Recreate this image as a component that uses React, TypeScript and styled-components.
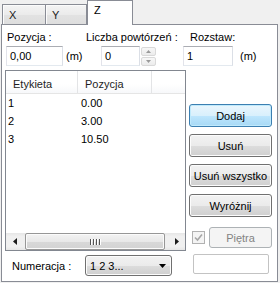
import React from "react";
import styled, { createGlobalStyle, css } from "styled-components";

const GlobalStyle = createGlobalStyle`
  html, body { margin: 0; padding: 0; background: #f0f0f0; }
  body {
    font-family: "Liberation Sans", Arial, sans-serif;
    font-size: 11px;
    color: #000;
  }
  * { box-sizing: border-box; }
`;

const Window = styled.div`
  width: 280px;
  height: 283px;
  padding: 0 2px 1px 1px;
  display: flex;
  flex-direction: column;
`;

const TabStrip = styled.div`
  display: flex;
  align-items: flex-start;
  height: 25px;
  padding-left: 1px;
  position: relative;
  z-index: 1;
`;

const Tab = styled.div<{ $selected?: boolean; $w: number; $overlap?: boolean }>`
  width: ${(p) => p.$w}px;
  margin-left: ${(p) => (p.$overlap ? -1 : 0)}px;
  border: 1px solid #898c95;
  border-bottom: none;
  padding-left: 6px;
  line-height: 13px;
  ${(p) =>
    p.$selected
      ? css`
          height: 25px;
          background: #ffffff;
          padding-top: 3px;
          position: relative;
          z-index: 2;
        `
      : css`
          height: 20px;
          margin-top: 4px;
          background: linear-gradient(#f4f4f4, #ebebeb 50%, #e2e2e2 51%, #dedede);
          box-shadow: inset 1px 1px 0 #fcfcfc;
          padding-top: 4px;
          color: #1a1a1a;
        `}
`;

const Panel = styled.div`
  flex: 1;
  margin-top: -1px;
  border: 1px solid #898c95;
  background: #ffffff;
  padding: 6px 0 0 3px;
  display: flex;
  flex-direction: column;
`;

const TopRow = styled.div`
  display: grid;
  grid-template-columns: 80px 97px 1fr;
  padding-left: 1px;
`;

const Field = styled.div`
  display: flex;
  flex-direction: column;
  gap: 2px;
`;

const Label = styled.div<{ $offset?: number }>`
  line-height: 13px;
  height: 13px;
  margin-left: ${(p) => p.$offset ?? 0}px;
  white-space: nowrap;
`;

const InputRow = styled.div<{ $offset?: number }>`
  display: flex;
  align-items: center;
  margin-left: ${(p) => p.$offset ?? 0}px;
  height: 20px;
`;

const TextBox = styled.div<{ $w: number }>`
  width: ${(p) => p.$w}px;
  height: 20px;
  border: 1px solid;
  border-color: #abadb3 #dbdfe6 #e3e9ef #e2e3ea;
  background: #fff;
  padding: 0 0 0 3px;
  line-height: 18px;
`;

const Unit = styled.span<{ $gap: number }>`
  margin-left: ${(p) => p.$gap}px;
  line-height: 13px;
`;

const Spinner = styled.div`
  width: 15px;
  height: 19px;
  display: flex;
  flex-direction: column;
  gap: 1px;
  margin-left: 1px;
`;

const SpinButton = styled.div`
  flex: 1;
  border: 1px solid #d9d9d9;
  border-radius: 2px;
  background: linear-gradient(#f7f7f7, #ececec);
  display: flex;
  align-items: center;
  justify-content: center;
`;

const Body = styled.div`
  display: flex;
  gap: 3px;
  margin-top: 4px;
`;

const LeftCol = styled.div`
  width: 181px;
  display: flex;
  flex-direction: column;
`;

const Table = styled.div`
  height: 181px;
  border: 1px solid #828790;
  background: #fff;
  display: flex;
  flex-direction: column;
`;

const Cols = css`
  display: grid;
  grid-template-columns: 72px 74px 1fr;
`;

const HeaderRow = styled.div`
  ${Cols};
  height: 23px;
  border-bottom: 1px solid #e5e5e5;
  background: linear-gradient(#ffffff, #ffffff 60%, #f7f8fa);
`;

const HeaderCell = styled.div`
  border-right: 1px solid #e3e4e6;
  padding: 7px 0 0 7px;
  line-height: 13px;
  color: #1e1e1e;
  &:last-child { border-right: none; }
`;

const Rows = styled.div`
  flex: 1;
`;

const Row = styled.div`
  ${Cols};
  height: 18px;
  line-height: 18px;
`;

const Cell = styled.div<{ $pad: number }>`
  padding-left: ${(p) => p.$pad}px;
`;

const HScroll = styled.div`
  height: 17px;
  display: flex;
  background: linear-gradient(#e6e6e6, #f0f0f0 20%, #f0f0f0 80%, #e6e6e6);
`;

const ScrollArrow = styled.div`
  width: 17px;
  display: flex;
  align-items: center;
  justify-content: center;
`;

const Track = styled.div`
  flex: 1;
  display: flex;
  padding: 0 3px 0 2px;
`;

const Thumb = styled.div`
  flex: 1;
  border: 1px solid #979797;
  border-radius: 2px;
  background: linear-gradient(#f3f3f3, #e8e8e8 50%, #d8d8d8 51%, #d3d3d3);
  box-shadow: inset 0 0 0 1px #fbfbfb;
  display: flex;
  align-items: center;
  justify-content: center;
`;

const Grip = styled.div`
  display: flex;
  gap: 2px;
  span {
    width: 1px;
    height: 6px;
    background: #555;
    box-shadow: 1px 0 0 #fff;
  }
`;

const NumRow = styled.div`
  display: flex;
  align-items: center;
  margin-top: 4px;
`;

const NumLabel = styled.div`
  width: 80px;
  padding-left: 7px;
`;

const Combo = styled.div`
  width: 87px;
  height: 21px;
  border: 1px solid #707070;
  border-radius: 3px;
  background: linear-gradient(#f2f2f2, #ebebeb 50%, #dddddd 51%, #cfcfcf);
  box-shadow: inset 0 0 0 1px #fcfcfc;
  display: flex;
  align-items: center;
  justify-content: space-between;
  padding: 0 5px 0 4px;
`;

const RightCol = styled.div`
  width: 83px;
  display: flex;
  flex-direction: column;
  padding-top: 34px;
`;

const ButtonStack = styled.div`
  display: flex;
  flex-direction: column;
  gap: 7px;
`;

const Button = styled.div<{ $variant?: "default" | "normal" | "disabled"; $w?: number }>`
  height: ${(p) => (p.$variant === "disabled" ? 21 : 23)}px;
  width: ${(p) => (p.$w ? `${p.$w}px` : "100%")};
  border: 1px solid #707070;
  border-radius: 3px;
  display: flex;
  align-items: center;
  justify-content: center;
  white-space: nowrap;
  background: linear-gradient(#f2f2f2, #ebebeb 50%, #dddddd 51%, #cfcfcf);
  box-shadow: inset 0 0 0 1px #fcfcfc;
  ${(p) =>
    p.$variant === "default" &&
    css`
      border-color: #3c7fb1;
      background: linear-gradient(#eaf6fd, #d9f0fc 50%, #bee6fd 51%, #a7d9f5);
      box-shadow: inset 0 0 0 1px #c0eafc;
    `}
  ${(p) =>
    p.$variant === "disabled" &&
    css`
      border-color: #adb2b5;
      background: #f4f4f4;
      box-shadow: none;
      color: #838383;
    `}
`;

const CheckRow = styled.div`
  display: flex;
  align-items: center;
  gap: 4px;
  margin-top: 10px;
  padding-left: 3px;
`;

const CheckBox = styled.div`
  width: 13px;
  height: 13px;
  border: 1px solid #b1b1b1;
  background: #f4f4f4;
  display: flex;
  align-items: center;
  justify-content: center;
`;

const EmptyBox = styled.div`
  width: 76px;
  height: 20px;
  margin: 6px 0 0 4px;
  border: 1px solid #c3c3c3;
  border-radius: 2px;
  background: #fff;
`;

const Tri = ({ dir, color = "#000", size = 7 }: { dir: "up" | "down" | "left" | "right"; color?: string; size?: number }) => {
  const h = Math.ceil(size / 2);
  const horiz = dir === "left" || dir === "right";
  const w = horiz ? h : size;
  const hh = horiz ? size : h;
  let pts = "";
  if (dir === "down") pts = `0,0 ${size},0 ${size / 2},${h}`;
  if (dir === "up") pts = `0,${h} ${size},${h} ${size / 2},0`;
  if (dir === "right") pts = `0,0 0,${size} ${h},${size / 2}`;
  if (dir === "left") pts = `${h},0 ${h},${size} 0,${size / 2}`;
  return (
    <svg width={w} height={hh} viewBox={`0 0 ${w} ${hh}`}>
      <polygon points={pts} fill={color} />
    </svg>
  );
};

const rows = [
  ["1", "0.00"],
  ["2", "3.00"],
  ["3", "10.50"],
];

export default function App() {
  return (
    <>
      <GlobalStyle />
      <Window>
        <TabStrip>
          <Tab $w={44}>X</Tab>
          <Tab $w={42} $overlap>
            Y
          </Tab>
          <Tab $w={46} $selected>
            Z
          </Tab>
        </TabStrip>
        <Panel>
          <TopRow>
            <Field>
              <Label $offset={1}>Pozycja :</Label>
              <InputRow>
                <TextBox $w={57}>0,00</TextBox>
                <Unit $gap={3}>(m)</Unit>
              </InputRow>
            </Field>
            <Field>
              <Label>Liczba powtórzeń :</Label>
              <InputRow $offset={15}>
                <TextBox $w={39}>0</TextBox>
                <Spinner>
                  <SpinButton>
                    <Tri dir="up" color="#9a9a9a" size={5} />
                  </SpinButton>
                  <SpinButton>
                    <Tri dir="down" color="#9a9a9a" size={5} />
                  </SpinButton>
                </Spinner>
              </InputRow>
            </Field>
            <Field>
              <Label $offset={7}>Rozstaw:</Label>
              <InputRow>
                <TextBox $w={50}>1</TextBox>
                <Unit $gap={7}>(m)</Unit>
              </InputRow>
            </Field>
          </TopRow>
          <Body>
            <LeftCol>
              <Table>
                <HeaderRow>
                  <HeaderCell>Etykieta</HeaderCell>
                  <HeaderCell>Pozycja</HeaderCell>
                  <HeaderCell />
                </HeaderRow>
                <Rows>
                  {rows.map(([a, b]) => (
                    <Row key={a}>
                      <Cell $pad={2}>{a}</Cell>
                      <Cell $pad={3}>{b}</Cell>
                      <Cell $pad={0} />
                    </Row>
                  ))}
                </Rows>
                <HScroll>
                  <ScrollArrow>
                    <Tri dir="left" color="#1c1c1c" size={7} />
                  </ScrollArrow>
                  <Track>
                    <Thumb>
                      <Grip>
                        <span />
                        <span />
                        <span />
                        <span />
                      </Grip>
                    </Thumb>
                  </Track>
                  <ScrollArrow>
                    <Tri dir="right" color="#1c1c1c" size={7} />
                  </ScrollArrow>
                </HScroll>
              </Table>
              <NumRow>
                <NumLabel>Numeracja :</NumLabel>
                <Combo>
                  <span>1 2 3...</span>
                  <Tri dir="down" size={7} />
                </Combo>
              </NumRow>
            </LeftCol>
            <RightCol>
              <ButtonStack>
                <Button $variant="default">Dodaj</Button>
                <Button>Usuń</Button>
                <Button>Usuń wszystko</Button>
                <Button>Wyróżnij</Button>
              </ButtonStack>
              <CheckRow>
                <CheckBox>
                  <svg width="9" height="9" viewBox="0 0 9 9">
                    <path d="M1 4.5 L3.5 7 L8 1.5" fill="none" stroke="#a6a6a6" strokeWidth="1.6" />
                  </svg>
                </CheckBox>
                <Button $variant="disabled" $w={63}>
                  Piętra
                </Button>
              </CheckRow>
              <EmptyBox />
            </RightCol>
          </Body>
        </Panel>
      </Window>
    </>
  );
}
